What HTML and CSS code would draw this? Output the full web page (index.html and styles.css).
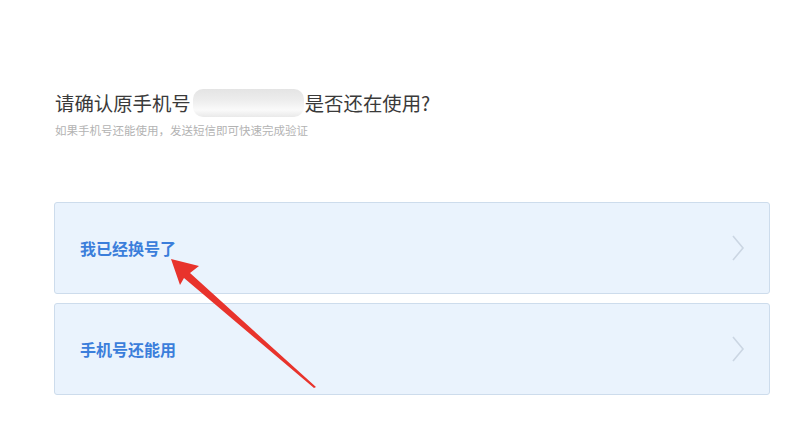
FILE: index.html
```html
<!DOCTYPE html>
<html lang="zh-CN">

<head>
    <meta charset="UTF-8">
    <meta name="viewport" content="width=device-width, initial-scale=1.0">
    <title>确认原手机号</title>
    <link rel="stylesheet" href="styles.css">
</head>

<body>
    <div class="page">
        <h1 class="title">请确认原手机号<span class="masked"></span>是否还在使用?</h1>
        <p class="hint">如果手机号还能使用，发送短信即可快速完成验证</p>

        <div class="options">
            <a class="option" href="#">
                <span>我已经换号了</span>
                <svg class="chevron" width="14" height="28" viewBox="0 0 14 28">
                    <path d="M2 2 L12 14 L2 26" fill="none" stroke="#cbd6e3" stroke-width="1.6" />
                </svg>
            </a>
            <a class="option" href="#">
                <span>手机号还能用</span>
                <svg class="chevron" width="14" height="28" viewBox="0 0 14 28">
                    <path d="M2 2 L12 14 L2 26" fill="none" stroke="#cbd6e3" stroke-width="1.6" />
                </svg>
            </a>
        </div>

        <!-- annotation arrow drawn over the first option -->
        <svg class="arrow" width="800" height="433" viewBox="0 0 800 433">
            <polygon points="171,259 199,266 190,273 316,387 314,388 184,278 180,285" fill="#e8332c" />
        </svg>
    </div>
</body>

</html>
```

FILE: styles.css
```css
body {
    margin: 0;
    background-color: #ffffff;
    font-family: "Noto Sans CJK SC", "Noto Sans", sans-serif;
}

.page {
    position: relative;
    width: 800px;
    height: 433px;
    padding: 84px 30px 0 54px;
    box-sizing: border-box;
}

.title {
    margin: 0 0 0 1px;
    font-size: 19.4px;
    font-weight: normal;
    line-height: 38px;
    color: #3a3a3a;
    display: flex;
    align-items: center;
}

.masked {
    display: inline-block;
    width: 111px;
    height: 28px;
    margin: 0 1px 0 2px;
    border-radius: 10px;
    background: linear-gradient(180deg, #e4e4e4 0%, #ededed 40%, #fafafa 75%, #e9e9e9 100%);
}

.hint {
    margin: 0 0 0 1px;
    font-size: 11.5px;
    line-height: 16px;
    color: #b3b3b3;
}

.options {
    margin-top: 64px;
    display: flex;
    flex-direction: column;
    gap: 9px;
}

.option {
    height: 92px;
    display: flex;
    align-items: center;
    justify-content: space-between;
    padding: 0 24px 0 25px;
    border: 1px solid #cddcec;
    border-radius: 3px;
    background-color: #eaf3fd;
    text-decoration: none;
    box-sizing: border-box;
}

.option span {
    font-size: 16px;
    font-weight: bold;
    color: #3b7edb;
}

.arrow {
    position: absolute;
    left: 0;
    top: 0;
    pointer-events: none;
}
```
